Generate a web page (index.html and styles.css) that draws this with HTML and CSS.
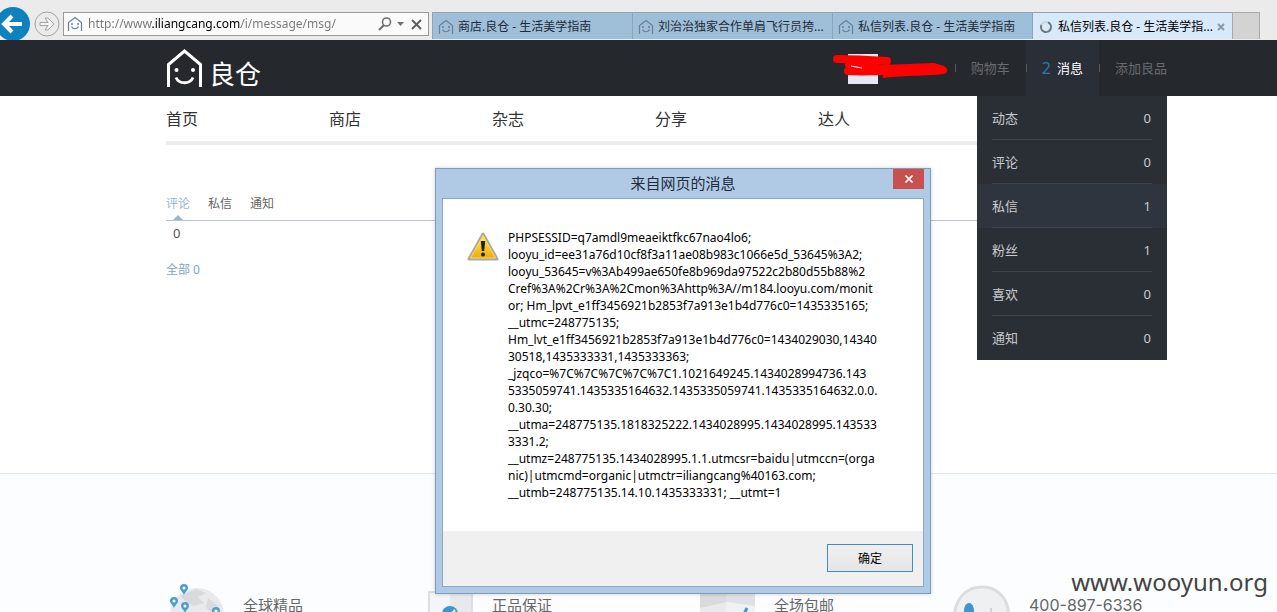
FILE: index.html
```html
<!DOCTYPE html>
<html lang="zh-CN">
<head>
    <meta charset="UTF-8">
    <meta name="viewport" content="width=device-width, initial-scale=1.0">
    <title>私信列表.良仓 - 生活美学指南</title>
    <link rel="stylesheet" href="styles.css">
</head>
<body>
    <svg class="sprite" aria-hidden="true">
        <symbol id="house" viewBox="0 0 16 16">
            <path d="M1.5 15V6.5L8 1.5l6.500 5V15M4.500 10.500c1.500 3 5.500 3 7 0" fill="none" stroke="currentColor" stroke-width="1.200"/>
            <circle cx="5" cy="8" r="1" fill="currentColor"/>
            <circle cx="11" cy="8" r="1" fill="currentColor"/>
        </symbol>
        <symbol id="pin" viewBox="0 0 8 11">
            <path d="M4 11C3 8 0 6.500 0 4a4 4 0 0 1 8 0c0 2.500-3 4-4 7z" fill="#4a9fd0"/>
            <circle cx="4" cy="4" r="1.500" fill="#fff"/>
        </symbol>
    </svg>

    <!-- Browser bar -->
    <div class="browser">
        <div class="browser-nav">
            <button class="back" aria-label="后退">
                <svg width="31" height="34" viewBox="0 0 31 34">
                    <circle cx="13" cy="17" r="17" fill="#0d82bf"/>
                    <path d="M3 17h19M12 9l-8 8 8 8" fill="none" stroke="#fff" stroke-width="4"/>
                </svg>
            </button>
            <button class="forward" aria-label="前进">
                <svg width="26" height="26" viewBox="0 0 26 26">
                    <circle cx="13" cy="13" r="12" fill="none" stroke="#a3a3a3"/>
                    <path d="M6 11.500h8l-3-4.500h3l6 6-6 6h-3l3-4.500H6z" fill="#f3f3f3" stroke="#a3a3a3"/>
                </svg>
            </button>
        </div>
        <form class="address">
            <svg class="favicon" width="16" height="16"><use href="#house"/></svg>
            <input class="url" type="text" aria-label="地址" value="http://www.iliangcang.com/i/message/msg/">
            <button type="button" aria-label="搜索">
                <svg width="14" height="14" viewBox="0 0 14 14" fill="none" stroke="#707070"><circle cx="8.500" cy="5" r="4" stroke-width="1.600"/><path d="M6 8l-5 5" stroke-width="2.200"/></svg>
            </button>
            <button type="button" aria-label="显示地址列表">
                <svg width="7" height="4" viewBox="0 0 7 4"><path d="M0 0h7L3.500 4z" fill="#707070"/></svg>
            </button>
            <button type="button" class="stop" aria-label="停止">
                <svg width="11" height="11" viewBox="0 0 11 11"><path d="M1 1l9 9M10 1l-9 9" stroke="#606060" stroke-width="2"/></svg>
            </button>
        </form>
        <div class="tabs">
            <a class="tab" href="#"><svg class="favicon" width="16" height="16"><use href="#house"/></svg><span>商店.良仓 - 生活美学指南</span></a>
            <a class="tab" href="#"><svg class="favicon" width="16" height="16"><use href="#house"/></svg><span>刘治治独家合作单肩飞行员挎...</span></a>
            <a class="tab" href="#"><svg class="favicon" width="16" height="16"><use href="#house"/></svg><span>私信列表.良仓 - 生活美学指南</span></a>
            <a class="tab active" href="#">
                <svg width="16" height="16" viewBox="0 0 16 16"><circle cx="8" cy="8" r="5" fill="none" stroke="#c9d3dc" stroke-width="2"/><path d="M10 3.400A5 5 0 1 1 3.400 6" fill="none" stroke="#70767d" stroke-width="2"/></svg>
                <span>私信列表.良仓 - 生活美学指...</span>
                <svg class="tab-close" width="8" height="8" viewBox="0 0 8 8"><path d="M1 1l6 6M7 1L1 7" stroke="#8c98a4" stroke-width="1.800"/></svg>
            </a>
            <button class="new-tab" aria-label="新建选项卡"></button>
        </div>
    </div>

    <!-- Site header -->
    <header class="header">
        <a class="logo" href="#">
            <svg width="37" height="40" viewBox="0 0 37 40" fill="none" stroke="#fff">
                <path d="M2.500 39V16.500L18.500 3l16 13.500V39" stroke-width="3"/>
                <path d="M10 29.500c3 7 14 7 17 0" stroke-width="2.800"/>
                <circle cx="10.500" cy="22" r="2" fill="#fff" stroke="none"/>
                <circle cx="27" cy="22" r="2" fill="#fff" stroke="none"/>
            </svg>
            <span>良仓</span>
        </a>
        <nav class="user-nav">
            <div class="user">
                <div class="avatar"></div>
                <svg class="scribble" width="116" height="28" viewBox="0 0 116 28">
                    <path d="M4 5c8 0 20 0 50 2M15 17c15 1 20 0 45 0M16 11c20 2 30 5 44 4" fill="none" stroke="#f00" stroke-width="8" stroke-linecap="round"/>
                    <path d="M50 11l51-2 10 3c5 3 4 7 0 8-10 2-40 1-61 4z" fill="#f00"/>
                    <path d="M18 12l11 2" stroke="#fff"/>
                </svg>
            </div>
            <a href="#">购物车</a>
            <a class="current" href="#"><b>2</b>消息</a>
            <a href="#">添加良品</a>
            <ul class="dropdown">
                <li><a href="#">动态<span>0</span></a></li>
                <li><a href="#">评论<span>0</span></a></li>
                <li class="hover"><a href="#">私信<span>1</span></a></li>
                <li><a href="#">粉丝<span>1</span></a></li>
                <li><a href="#">喜欢<span>0</span></a></li>
                <li><a href="#">通知<span>0</span></a></li>
            </ul>
        </nav>
    </header>

    <main class="main">
        <nav class="main-nav">
            <a href="#">首页</a>
            <a href="#">商店</a>
            <a href="#">杂志</a>
            <a href="#">分享</a>
            <a href="#">达人</a>
        </nav>
        <nav class="sub-nav">
            <a class="selected" href="#">评论</a>
            <a href="#">私信</a>
            <a href="#">通知</a>
        </nav>
        <div class="count">0</div>
        <a class="all" href="#">全部 0</a>
    </main>

    <footer class="footer">
        <div class="service">
            <svg width="55" height="60" viewBox="0 0 55 60">
                <circle cx="27" cy="31" r="27" fill="#e9eaec"/>
                <path d="M10 12l16-7 10 4-8 4 6 6-10 3-8-4zM38 14l10 8-4 8-8-6z" fill="#d9dadc"/>
                <use href="#pin" x="10" y="0" width="8" height="11"/>
                <use href="#pin" x="0" y="13" width="8" height="11"/>
                <use href="#pin" x="11" y="18" width="8" height="11"/>
                <use href="#pin" x="42" y="23" width="8" height="11"/>
            </svg>
            <span>全球精品</span>
        </div>
        <div class="service">
            <svg width="46" height="60" viewBox="0 0 46 60">
                <path d="M1 8h43v52H1z" fill="#f4f5f7" stroke="#dcdee1" stroke-width="2"/>
                <path d="M22 9h21v50H22z" fill="#e8e9ec"/>
                <circle cx="22" cy="30" r="8" fill="#3c96d2"/>
                <path d="M18 30l3 3 6-7" fill="none" stroke="#fff" stroke-width="2"/>
            </svg>
            <span>正品保证</span>
        </div>
        <div class="service">
            <svg width="56" height="60" viewBox="0 0 56 60">
                <path d="M0 6h55v54H0z" fill="#e9eaec"/>
                <path d="M0 6h26v12L0 24z" fill="#d9dadc"/>
                <path d="M26 6h29v16l-29-4z" fill="#e0e1e4"/>
                <path d="M26 18l29 4v38H26z" fill="#f0f1f3"/>
                <path d="M47 24l-6 12" stroke="#3c96d2" stroke-width="3"/>
            </svg>
            <span>全场包邮</span>
        </div>
        <div class="service">
            <svg width="58" height="60" viewBox="0 0 58 60">
                <path d="M3 60C-2 30 2 12 18 5c10-4 22-2 28 4 10 8 12 20 7 51" fill="#eff0f2" stroke="#dcdddf" stroke-width="3"/>
                <ellipse cx="16" cy="27" rx="5" ry="8" fill="#3c96d2"/>
                <path d="M38 24v8" stroke="#d0d2d5" stroke-width="2"/>
            </svg>
            <span class="phone">400-897-6336</span>
        </div>
    </footer>

    <div class="watermark">www.wooyun.org</div>

    <!-- Alert window -->
    <div class="dialog" role="alertdialog" aria-labelledby="dialog-title">
        <div class="dialog-bar">
            <div class="dialog-title" id="dialog-title">来自网页的消息</div>
            <button class="dialog-close" aria-label="关闭">
                <svg width="8" height="8" viewBox="0 0 8 8"><path d="M.5.5l7 7M7.500.5l-7 7" stroke="#fff" stroke-width="1.600"/></svg>
            </button>
        </div>
        <div class="dialog-body">
            <div class="dialog-content">
                <svg width="32" height="30" viewBox="0 0 32 30">
                    <defs>
                        <linearGradient id="warn" x1="0" y1="0" x2="0" y2="1">
                            <stop offset="0" stop-color="#fff04a"/>
                            <stop offset="1" stop-color="#f2a90c"/>
                        </linearGradient>
                    </defs>
                    <path d="M16 2L2 27h28z" fill="url(#warn)" stroke="#aaa99f" stroke-width="3" stroke-linejoin="round"/>
                    <path d="M16 3.500L3.500 26h25z" fill="url(#warn)" stroke="#f7dc62" stroke-linejoin="round"/>
                    <path d="M13.800 9h4.400l-1 10h-2.400z" fill="#26200a"/>
                    <circle cx="16" cy="22.500" r="2" fill="#26200a"/>
                </svg>
                <p>PHPSESSID=q7amdl9meaeiktfkc67nao4lo6;<br>
                looyu_id=ee31a76d10cf8f3a11ae08b983c1066e5d_53645%3A2;<br>
                looyu_53645=v%3Ab499ae650fe8b969da97522c2b80d55b88%2<br>
                Cref%3A%2Cr%3A%2Cmon%3Ahttp%3A//m184.looyu.com/monit<br>
                or; Hm_lpvt_e1ff3456921b2853f7a913e1b4d776c0=1435335165;<br>
                __utmc=248775135;<br>
                Hm_lvt_e1ff3456921b2853f7a913e1b4d776c0=1434029030,14340<br>
                30518,1435333331,1435333363;<br>
                _jzqco=%7C%7C%7C%7C%7C1.1021649245.1434028994736.143<br>
                5335059741.1435335164632.1435335059741.1435335164632.0.0.<br>
                0.30.30;<br>
                __utma=248775135.1818325222.1434028995.1434028995.143533<br>
                3331.2;<br>
                __utmz=248775135.1434028995.1.1.utmcsr=baidu|utmccn=(orga<br>
                nic)|utmcmd=organic|utmctr=iliangcang%40163.com;<br>
                __utmb=248775135.14.10.1435333331; __utmt=1</p>
            </div>
            <div class="dialog-footer">
                <button class="ok">确定</button>
            </div>
        </div>
    </div>
</body>
</html>
```

FILE: styles.css
```css
* {
    box-sizing: border-box;
}

body {
    display: flex;
    flex-direction: column;
    height: 100vh;
    margin: 0;
    overflow: hidden;
    background-color: #fff;
    color: #333;
    font-family: "Noto Sans", "Noto Sans CJK SC", sans-serif;
    font-size: 12px;
}

a {
    color: inherit;
    text-decoration: none;
}

button {
    padding: 0;
    border: none;
    background: none;
    font-family: inherit;
    cursor: pointer;
}

svg {
    display: block;
    flex-shrink: 0;
}

.sprite {
    position: absolute;
    width: 0;
    height: 0;
}

/* Browser bar */
.browser {
    display: flex;
    flex-shrink: 0;
    height: 40px;
    padding-top: 12px;
    background-color: #ebebeb;
}

.browser-nav {
    display: flex;
    align-items: center;
    gap: 3px;
    width: 63px;
    height: 24px;
}

.address {
    display: flex;
    align-items: center;
    gap: 5px;
    width: 366px;
    height: 24px;
    margin: 0 3px 0 0;
    padding: 0 6px 0 3px;
    border: 1px solid #999;
    background-color: #fafafa;
}

.favicon {
    color: #6b7f95;
}

/* The domain is darker than the rest of the address */
.url {
    flex: 1;
    min-width: 0;
    padding: 0;
    border: none;
    outline: none;
    background: linear-gradient(to right, #777 63px, #000 63px, #000 153px, #777 153px);
    -webkit-background-clip: text;
    background-clip: text;
    color: transparent;
    font-family: inherit;
    font-size: 12px;
    line-height: 20px;
}

.stop {
    margin-left: 2px;
}

.tabs {
    display: flex;
    flex: 1;
    min-width: 0;
    height: 27px;
}

.tab {
    display: flex;
    align-items: center;
    gap: 4px;
    width: 200px;
    padding: 2px 0 0 5px;
    border: 1px solid #8ea5b8;
    border-width: 1px 0 0 1px;
    background-color: #9fbfd9;
    color: #1c2b3a;
    line-height: 20px;
    white-space: nowrap;
}

.tab.active {
    background-color: #d8e9fa;
    color: #000;
}

.new-tab {
    width: 28px;
    border: 1px solid #aaa;
    border-bottom: none;
    background-color: #d3d3d3;
}

/* Site header */
.header {
    display: flex;
    flex-shrink: 0;
    justify-content: space-between;
    height: 56px;
    padding: 0 110px 0 166px;
    background-color: #25282d;
}

.logo {
    display: flex;
    gap: 6px;
    padding-top: 8px;
    color: #fff;
    font-size: 26px;
    line-height: 52px;
}

.user-nav {
    position: relative;
    display: flex;
    color: #686b70;
    font-size: 13px;
    line-height: 56px;
}

.user-nav > a {
    display: flex;
    padding: 0 16px;
    background: linear-gradient(#55585d, #55585d) left center / 1px 8px no-repeat;
}

.user-nav > a:nth-of-type(3) {
    padding-right: 0;
}

.user-nav > .current {
    gap: 6px;
    background-color: #2a2e37;
    color: #fff;
}

.current b {
    color: #2a77b0;
    font-size: 16px;
    font-weight: normal;
}

.user {
    position: relative;
    width: 107px;
    padding-top: 14px;
}

.avatar {
    width: 30px;
    height: 30px;
    background-color: #e8e8f4;
}

.scribble {
    position: absolute;
    top: 14px;
    left: -15px;
}

.dropdown {
    position: absolute;
    top: 56px;
    right: 0;
    z-index: 1;
    width: 190px;
    margin: 0;
    padding: 0;
    background-color: #2a2e35;
    color: #c8cacd;
    list-style: none;
}

.dropdown li {
    padding: 0 15px;
}

.dropdown .hover {
    background-color: #2f353e;
}

.dropdown a {
    display: flex;
    justify-content: space-between;
    padding: 2px 1px 0 0;
    border-bottom: 1px solid #41464e;
    line-height: 41px;
}

.dropdown li:last-child a {
    border-color: transparent;
}

/* Content */
.main {
    flex-shrink: 0;
    height: 377px;
    padding: 0 110px 0 166px;
}

.main-nav {
    display: grid;
    grid-template-columns: repeat(5, 163px);
    height: 49px;
    border-bottom: 4px solid #ececec;
    font-size: 16px;
    line-height: 46px;
}

.sub-nav {
    display: flex;
    gap: 18px;
    height: 34px;
    margin-top: 42px;
    border-bottom: 1px solid #b9c3c9;
    color: #666;
    line-height: 34px;
}

.sub-nav .selected {
    position: relative;
    color: #93b5d1;
}

.sub-nav .selected::after {
    content: "";
    position: absolute;
    bottom: 0;
    left: 7px;
    border: 5px solid transparent;
    border-top: none;
    border-bottom-color: #9ab5c9;
}

.count {
    padding-left: 7px;
    color: #555;
    font-size: 13px;
    line-height: 24px;
}

.all {
    display: block;
    margin-top: 14px;
    color: #7fa6c9;
    line-height: 22px;
}

/* Footer */
.footer {
    display: grid;
    flex: 1;
    grid-template-columns: 258px 272px 253px 1fr;
    min-height: 0;
    padding: 110px 110px 0 170px;
    overflow: hidden;
    border-top: 1px solid #e6eaee;
    background-color: #fbfdff;
}

.service {
    display: flex;
    gap: 18px;
    color: #666;
    font-size: 15px;
}

.service span {
    margin-top: 12px;
    line-height: 18px;
}

.service .phone {
    font-family: Inter, Arial, sans-serif;
    font-size: 16px;
}

.watermark {
    position: absolute;
    right: 9px;
    bottom: 16px;
    color: #444;
    font-size: 24px;
    line-height: 28px;
}

/* Alert window */
.dialog {
    position: absolute;
    top: 168px;
    left: 435px;
    z-index: 2;
    width: 496px;
    padding: 0 6px 6px;
    border: 1px solid #7d9cbf;
    background-color: #b0cae6;
    box-shadow: 0 0 4px rgba(0, 0, 0, 0.2);
    color: #000;
}

.dialog-bar {
    position: relative;
    height: 29px;
}

.dialog-title {
    color: #1e2c3c;
    font-size: 15px;
    line-height: 29px;
    text-align: center;
}

.dialog-close {
    position: absolute;
    top: 0;
    right: 0;
    display: flex;
    align-items: center;
    justify-content: center;
    width: 31px;
    height: 20px;
    background-color: #c75050;
}

.dialog-body {
    border: 1px solid #8aa9ca;
    background-color: #fff;
}

.dialog-content {
    display: flex;
    gap: 9px;
    padding: 30px 24px;
}

.dialog-content svg {
    margin-top: 3px;
}

.dialog-content p {
    margin: 0;
    line-height: 17px;
    white-space: nowrap;
}

.dialog-footer {
    display: flex;
    justify-content: flex-end;
    padding: 13px 10px 14px;
    background-color: #f0f0f0;
}

.ok {
    width: 86px;
    height: 28px;
    border: 1px solid #3c8dc8;
    background: linear-gradient(#f0f0f0, #e5e5e5);
    font-size: 12px;
}
```
